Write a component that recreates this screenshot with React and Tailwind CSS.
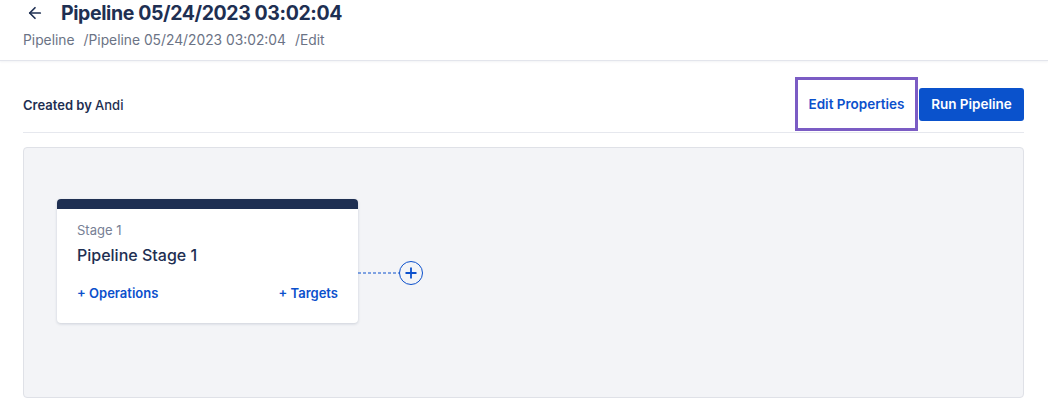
import { ArrowLeft } from 'lucide-react'

const font = { fontFamily: 'Inter, "Noto Sans", sans-serif' }

const App = () => {
  return (
    <div className="w-[1048px] h-[411px] bg-white overflow-hidden text-[#1e2f52]" style={font}>
      {/* Header */}
      <div className="h-[61px] border-b border-[#e3e5ec] shadow-[0_1px_2px_rgba(30,47,82,0.06)] pl-[23px]">
        <div className="flex items-center h-[26px]">
          <ArrowLeft className="w-[18px] h-[18px] ml-[3px] text-[#1e2f52]" strokeWidth={2.25} />
          <h1 className="ml-[17px] text-[19.5px] font-bold leading-[26px] tracking-[-0.4px]">
            Pipeline 05/24/2023 03:02:04
          </h1>
        </div>
        <div className="mt-[6px] text-[13.8px] leading-[17px] text-[#6b7385] flex">
          <span>Pipeline</span>
          <span className="ml-[9px]">/</span>
          <span>Pipeline 05/24/2023 03:02:04</span>
          <span className="ml-[9px]">/</span>
          <span>Edit</span>
        </div>
      </div>

      {/* Body */}
      <div className="pl-[23px] pr-[24px]">
        <div className="flex items-center justify-between h-[72px] border-b border-[#e6e8ee] pt-[17px] pb-[2px]">
          <div className="text-[13px] font-semibold pt-[3px]">
            Created by <span className="font-medium">Andi</span>
          </div>
          <div className="flex items-center">
            <button className="h-[54px] w-[123px] border-[3px] border-[#7b5cc4] text-[13.5px] font-semibold text-[#0b50cc]">
              Edit Properties
            </button>
            <button className="ml-[1px] h-[33px] w-[105px] rounded-[3px] bg-[#0a52cc] text-white text-[13.5px] font-semibold">
              Run Pipeline
            </button>
          </div>
        </div>

        {/* Canvas */}
        <div className="mt-[14px] h-[251px] rounded-[4px] border border-[#dfe1e7] bg-[#f3f4f7] pl-[33px] pt-[51px] flex items-start">
          <div className="w-[301px] h-[124px] bg-white rounded-[4px] shadow-[0_1px_3px_rgba(30,47,82,0.18)] overflow-hidden">
            <div className="h-[10px] bg-[#1e2f52]" />
            <div className="px-[20px] pt-[13px]">
              <div className="text-[13px] leading-[16px] text-[#778095]">Stage 1</div>
              <div className="mt-[7px] text-[16px] leading-[20px] font-medium">Pipeline Stage 1</div>
              <div className="mt-[19px] flex justify-between text-[13px] font-semibold text-[#0b50cc]">
                <span>+ Operations</span>
                <span>+ Targets</span>
              </div>
            </div>
          </div>
          <div className="mt-[62px] flex items-center text-[#0b50cc]">
            <svg width="41" height="2" viewBox="0 0 41 2">
              <line x1="0" y1="1" x2="41" y2="1" stroke="currentColor" strokeWidth="1" strokeDasharray="3 2" />
            </svg>
            <div className="w-[24px] h-[24px] rounded-full border border-[#0b50cc] flex items-center justify-center">
              <svg width="14" height="14" viewBox="0 0 14 14">
                <path d="M7 1.5v11M1.5 7h11" stroke="currentColor" strokeWidth="1.8" fill="none" />
              </svg>
            </div>
          </div>
        </div>
      </div>
    </div>
  )
}

export default App
